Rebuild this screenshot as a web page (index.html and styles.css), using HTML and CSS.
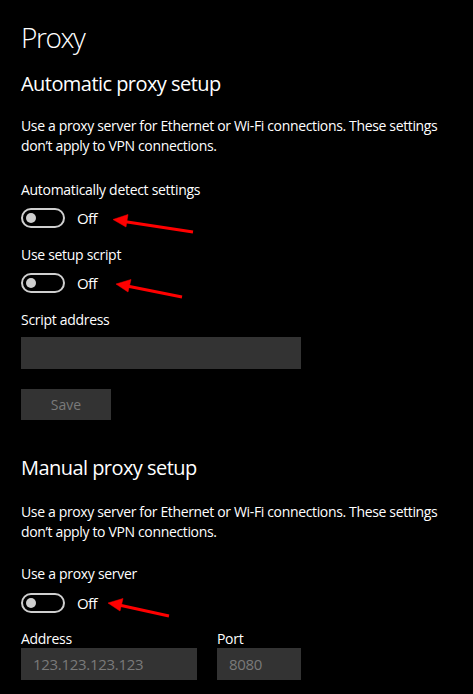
FILE: index.html
```html
<!DOCTYPE html>
<html>
<head>
<meta charset="utf-8">
<link rel="stylesheet" href="styles.css">
</head>
<body>
<main class="page">
  <h1 class="title">Proxy</h1>

  <h2 class="section-title">Automatic proxy setup</h2>
  <p class="desc">Use a proxy server for Ethernet or Wi-Fi connections. These settings don’t apply to VPN connections.</p>

  <div class="label label-first">Automatically detect settings</div>
  <div class="toggle-row">
    <span class="toggle"><span class="knob"></span></span>
    <span class="state">Off</span>
  </div>

  <div class="label label-next">Use setup script</div>
  <div class="toggle-row">
    <span class="toggle"><span class="knob"></span></span>
    <span class="state">Off</span>
  </div>

  <div class="label label-next">Script address</div>
  <div class="input input-wide"></div>
  <div class="button">Save</div>

  <h2 class="section-title section-manual">Manual proxy setup</h2>
  <p class="desc desc-manual">Use a proxy server for Ethernet or Wi-Fi connections. These settings don’t apply to VPN connections.</p>

  <div class="label label-proxy">Use a proxy server</div>
  <div class="toggle-row toggle-row-proxy">
    <span class="toggle"><span class="knob"></span></span>
    <span class="state">Off</span>
  </div>

  <div class="fields">
    <div class="field">
      <div class="field-label">Address</div>
      <div class="input input-address">123.123.123.123</div>
    </div>
    <div class="field">
      <div class="field-label">Port</div>
      <div class="input input-port">8080</div>
    </div>
  </div>
</main>

<svg class="annotations" width="473" height="694" viewBox="0 0 473 694">
  <g fill="#f00" stroke="#f00">
    <line x1="124" y1="221.5" x2="193" y2="232" stroke-width="3"/>
    <polygon points="113,219.5 128,214.5 126,227" stroke-width="0.5"/>
    <line x1="127" y1="286" x2="182" y2="297" stroke-width="3"/>
    <polygon points="116,284 131,279.5 128,292" stroke-width="0.5"/>
    <line x1="119" y1="605" x2="169" y2="616" stroke-width="3"/>
    <polygon points="108,603 123,598.5 120,611" stroke-width="0.5"/>
  </g>
</svg>
</body>
</html>
```
FILE: styles.css
```css
html, body {
  margin: 0;
  padding: 0;
  background: #000;
}

body {
  width: 473px;
  height: 694px;
  overflow: hidden;
  position: relative;
  color: #fff;
  font-family: "Segoe UI", "Open Sans", "Noto Sans", sans-serif;
}

.page {
  padding: 18px 0 0 21px;
  display: flex;
  flex-direction: column;
  align-items: flex-start;
}

.title {
  margin: 0;
  font-size: 28px;
  line-height: 38px;
  font-weight: 300;
  letter-spacing: -1.4px;
}

.section-title {
  margin: 14px 0 0;
  font-size: 20px;
  line-height: 28px;
  font-weight: 400;
  letter-spacing: -0.55px;
}

.section-manual {
  margin-top: 34px;
}

.desc {
  margin: 18px 0 0;
  font-size: 14px;
  line-height: 20px;
  width: 440px;
  letter-spacing: -0.35px;
}

.desc-manual {
  margin-top: 20px;
}

.label {
  font-size: 14px;
  line-height: 20px;
  letter-spacing: -0.3px;
}

.label-first { margin-top: 24px; }
.label-next { margin-top: 17px; }
.label-proxy { margin-top: 22px; }

.toggle-row {
  margin-top: 8px;
  display: flex;
  align-items: center;
  height: 20px;
}

.toggle-row-proxy { margin-top: 9px; }

.toggle {
  box-sizing: border-box;
  width: 44px;
  height: 20px;
  border: 2px solid #cfcfcf;
  border-radius: 10px;
  display: flex;
  align-items: center;
  padding-left: 3px;
}

.knob {
  width: 10px;
  height: 10px;
  border-radius: 50%;
  background: #cfcfcf;
}

.state {
  margin-left: 12px;
  font-size: 15px;
  line-height: 20px;
  letter-spacing: -0.6px;
}

.input {
  box-sizing: border-box;
  height: 32px;
  background: #333;
  color: #7a7a7a;
  font-size: 15px;
  line-height: 32px;
  padding-left: 12px;
  letter-spacing: -0.3px;
}

.input-wide {
  width: 280px;
  margin-top: 7px;
}

.button {
  margin-top: 20px;
  width: 90px;
  height: 31px;
  background: #333;
  color: #7a7a7a;
  font-size: 14px;
  line-height: 31px;
  text-align: center;
}

.fields {
  margin-top: 16px;
  display: flex;
  gap: 20px;
}

.field {
  display: flex;
  flex-direction: column;
}

.field-label {
  font-size: 14px;
  line-height: 19px;
  letter-spacing: -0.3px;
}

.input-address { width: 176px; }
.input-port { width: 84px; }

.annotations {
  position: absolute;
  left: 0;
  top: 0;
  pointer-events: none;
}
```
